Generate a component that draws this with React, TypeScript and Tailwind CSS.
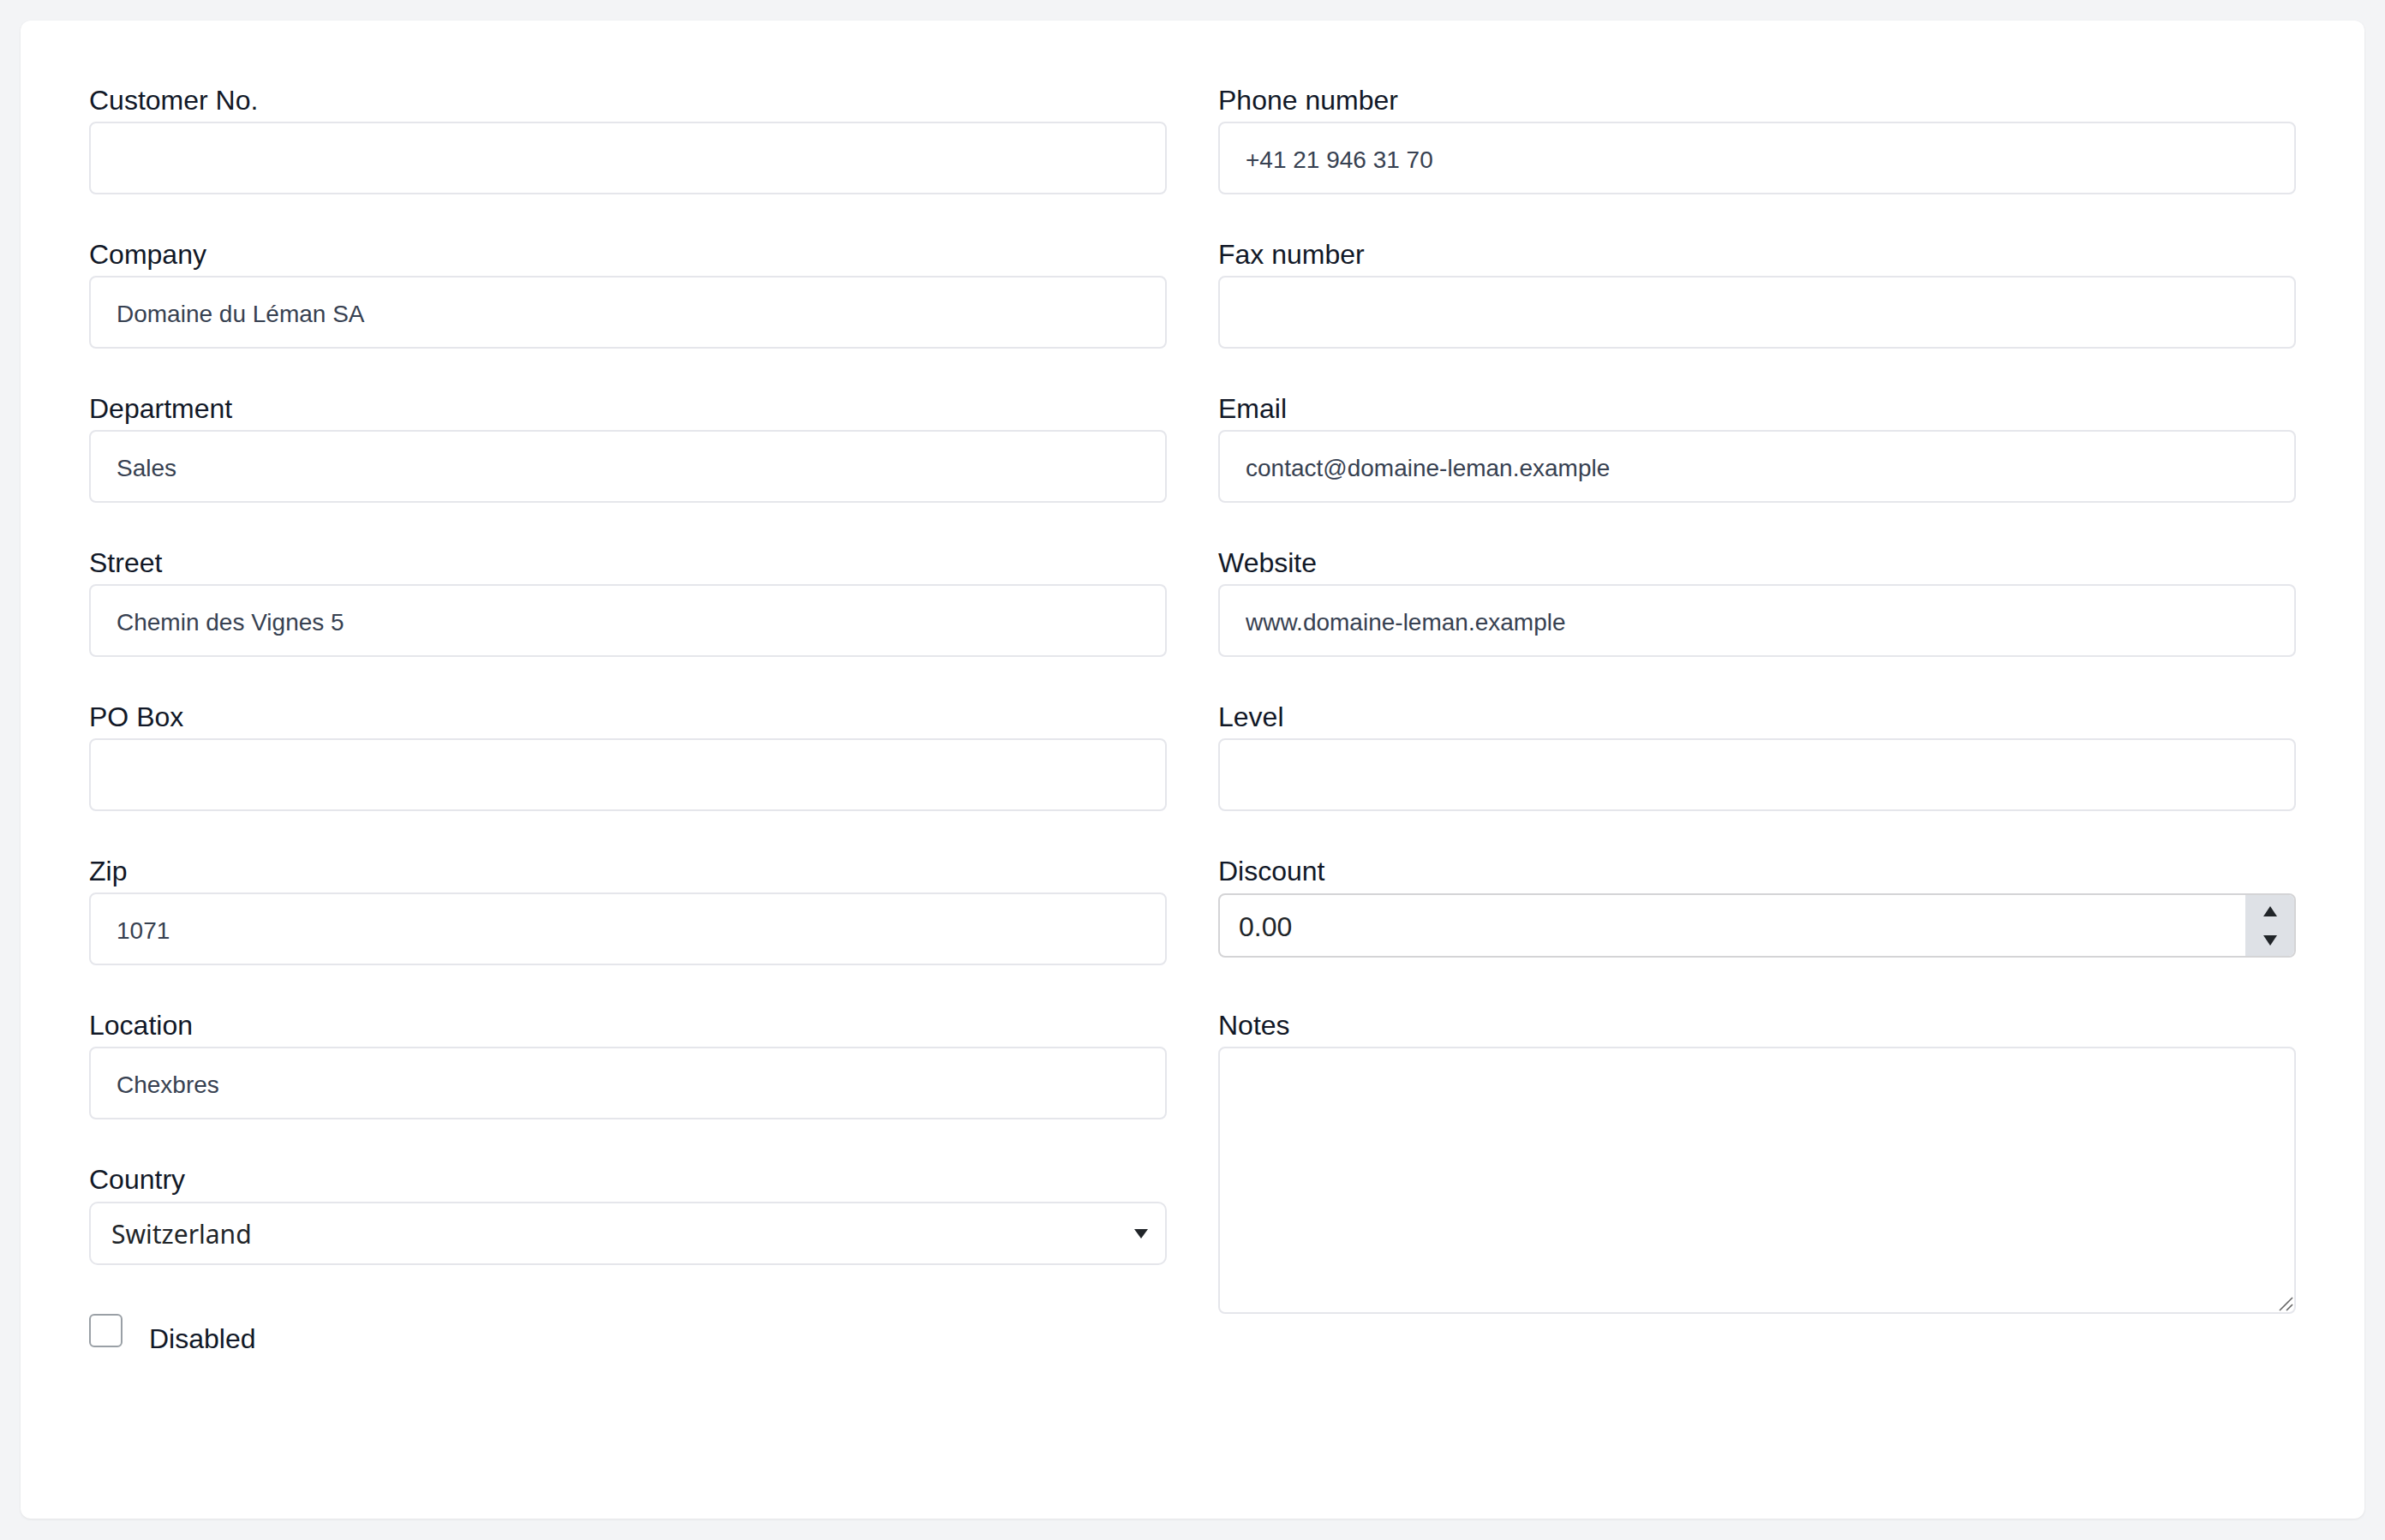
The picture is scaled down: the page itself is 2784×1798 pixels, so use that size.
import React from 'react';

const font = { fontFamily: '"Liberation Sans", Arial, sans-serif' };

interface FieldProps {
  label: string;
  value?: string;
}

const Label = ({ children }: { children: React.ReactNode }) => (
  <div className="text-[32px] leading-[48px] text-[#111827]">{children}</div>
);

const TextField = ({ label, value = '' }: FieldProps) => (
  <div className="flex flex-col">
    <Label>{label}</Label>
    <input
      type="text"
      readOnly
      value={value}
      className="mt-[1px] h-[85px] w-full rounded-[8px] border-2 border-[#e5e6eb] bg-white px-[30px] pt-[4px] text-[28px] text-[#374151] outline-none"
      style={font}
    />
  </div>
);

const DiscountField = () => (
  <div className="flex flex-col">
    <Label>Discount</Label>
    <div className="mt-[2px] h-[84px]">
      <div className="flex h-[75px] w-full overflow-hidden rounded-[8px] border-2 border-[#d4d4d6] bg-white">
        <input
          type="text"
          readOnly
          value="0.00"
          className="min-w-0 flex-1 px-[22px] pt-[2px] text-[32px] text-[#212529] outline-none"
          style={font}
        />
        <div className="flex w-[57px] flex-col items-center justify-center gap-[22px] bg-[#dee1e6]">
          <svg width="16" height="12" viewBox="0 0 16 12">
            <polygon points="8,0 16,12 0,12" fill="#212529" />
          </svg>
          <svg width="16" height="12" viewBox="0 0 16 12">
            <polygon points="0,0 16,0 8,12" fill="#212529" />
          </svg>
        </div>
      </div>
    </div>
  </div>
);

const CountryField = () => (
  <div className="flex flex-col">
    <Label>Country</Label>
    <div className="mt-[2px] flex h-[74px] w-full items-center justify-between rounded-[10px] border-2 border-[#e5e6eb] bg-white pl-[24px] pr-[20px]">
      <span
        className="text-[30px] text-[#212529]"
        style={{ fontFamily: '"Noto Sans", "Open Sans", sans-serif' }}
      >
        Switzerland
      </span>
      <svg width="16" height="11" viewBox="0 0 16 11">
        <polygon points="0,0 16,0 8,11" fill="#212529" />
      </svg>
    </div>
  </div>
);

const NotesField = () => (
  <div className="flex flex-col">
    <Label>Notes</Label>
    <div className="relative mt-[1px] h-[312px]">
      <textarea
        readOnly
        className="h-full w-full resize-none rounded-[8px] border-2 border-[#e5e6eb] bg-white px-[30px] py-[20px] text-[28px] text-[#374151] outline-none"
        style={font}
      />
      <svg
        className="pointer-events-none absolute bottom-[3px] right-[3px]"
        width="18"
        height="18"
        viewBox="0 0 18 18"
      >
        <line x1="2" y1="17" x2="17" y2="2" stroke="#666" strokeWidth="1.6" />
        <line x1="10" y1="17" x2="17" y2="10" stroke="#666" strokeWidth="1.6" />
      </svg>
    </div>
  </div>
);

const leftFields: FieldProps[] = [
  { label: 'Customer No.' },
  { label: 'Company', value: 'Domaine du Léman SA' },
  { label: 'Department', value: 'Sales' },
  { label: 'Street', value: 'Chemin des Vignes 5' },
  { label: 'PO Box' },
  { label: 'Zip', value: '1071' },
  { label: 'Location', value: 'Chexbres' },
];

const rightFields: FieldProps[] = [
  { label: 'Phone number', value: '+41 21 946 31 70' },
  { label: 'Fax number' },
  { label: 'Email', value: 'contact@domaine-leman.example' },
  { label: 'Website', value: 'www.domaine-leman.example' },
  { label: 'Level' },
];

export default function App() {
  return (
    <div className="min-h-screen bg-[#f3f4f6] p-[24px]" style={font}>
      <div className="h-[1749px] rounded-[12px] bg-white px-[80px] pt-[69px] shadow-[0_1px_3px_rgba(0,0,0,0.08)]">
        <div className="grid grid-cols-2 gap-x-[60px]">
          {/* left column */}
          <div className="flex flex-col gap-[46px]">
            {leftFields.map((f) => (
              <TextField key={f.label} {...f} />
            ))}
            <CountryField />
            <div className="mt-[11px] flex items-start">
              <div className="h-[39px] w-[39px] rounded-[6px] border-2 border-[#9aa0a6] bg-white" />
              <span className="ml-[31px] mt-[5px] text-[32px] leading-[48px] text-[#111827]">
                Disabled
              </span>
            </div>
          </div>

          {/* right column */}
          <div className="flex flex-col gap-[46px]">
            {rightFields.map((f) => (
              <TextField key={f.label} {...f} />
            ))}
            <DiscountField />
            <NotesField />
          </div>
        </div>
      </div>
    </div>
  );
}
